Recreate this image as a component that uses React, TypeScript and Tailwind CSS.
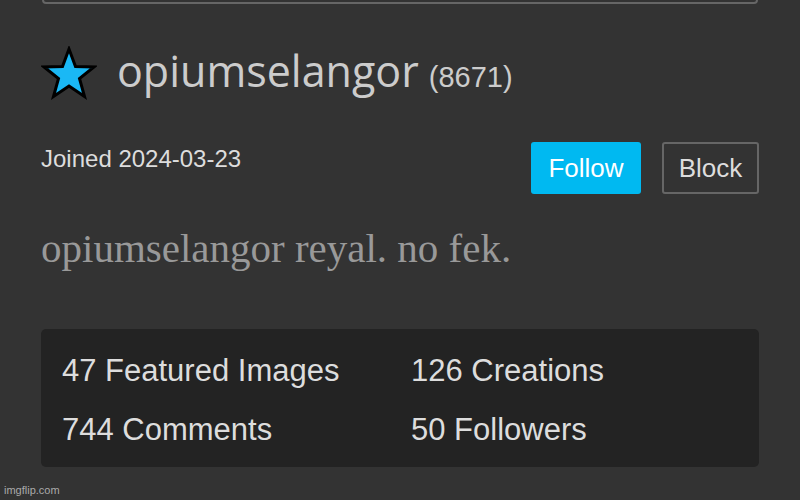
import React from 'react';

function Star() {
  return (
    <svg width="56" height="54" viewBox="0 0 56 54" className="shrink-0">
      <polygon
        points="28,3 34.5,20.5 53,21 38.5,32.5 43.5,50.5 28,40 12.5,50.5 17.5,32.5 3,21 21.5,20.5"
        fill="#1ab8f5"
        stroke="#000"
        strokeWidth="3"
        strokeLinejoin="miter"
      />
    </svg>
  );
}

const stats = [
  ['47 Featured Images', '126 Creations'],
  ['744 Comments', '50 Followers'],
];

export default function App() {
  return (
    <div className="relative w-[800px] h-[500px] overflow-hidden bg-[#333333] font-['Liberation_Sans',Arial,sans-serif]">
      {/* top box edge */}
      <div className="mx-[42px] -mt-[20px] h-[24px] rounded-[4px] border-2 border-[#666666]" />

      <div className="px-[41px]">
        {/* name row */}
        <div className="flex items-end gap-[20px] mt-[42px] h-[54px]">
          <Star />
          <div className="flex items-baseline gap-[10px] mb-[1px]">
            <span className="font-['Open_Sans',sans-serif] text-[43px] leading-[52px] text-[#cccccc]">opiumselangor</span>
            <span className="text-[29px] text-[#cccccc]">(8671)</span>
          </div>
        </div>

        {/* joined + buttons */}
        <div className="flex justify-between items-start mt-[42px]">
          <div className="text-[24px] leading-[28px] text-[#dddddd] pt-[3px]">Joined 2024-03-23</div>
          <div className="flex gap-[21px]">
            <button className="h-[52px] w-[110px] rounded-[3px] bg-[#00b9f1] text-white text-[26px]">Follow</button>
            <button className="h-[52px] w-[97px] rounded-[3px] border-2 border-[#666666] text-[#dddddd] text-[26px]">Block</button>
          </div>
        </div>

        {/* bio */}
        <div className="mt-[30px] font-['Liberation_Serif',serif] text-[41px] leading-[48px] text-[#999999]">
          opiumselangor reyal. no fek.
        </div>

        {/* stats */}
        <div className="mt-[57px] rounded-[5px] bg-[#232323] px-[21px] pt-[24px] pb-[19px] flex flex-col gap-[23px]">
          {stats.map((row, i) => (
            <div key={i} className="flex text-[31px] leading-[36px] text-[#dddddd]">
              <span className="w-[349px]">{row[0]}</span>
              <span>{row[1]}</span>
            </div>
          ))}
        </div>
      </div>

      <div className="absolute left-[4px] bottom-[2px] text-[11px] text-[#aaaaaa]">imgflip.com</div>
    </div>
  );
}
